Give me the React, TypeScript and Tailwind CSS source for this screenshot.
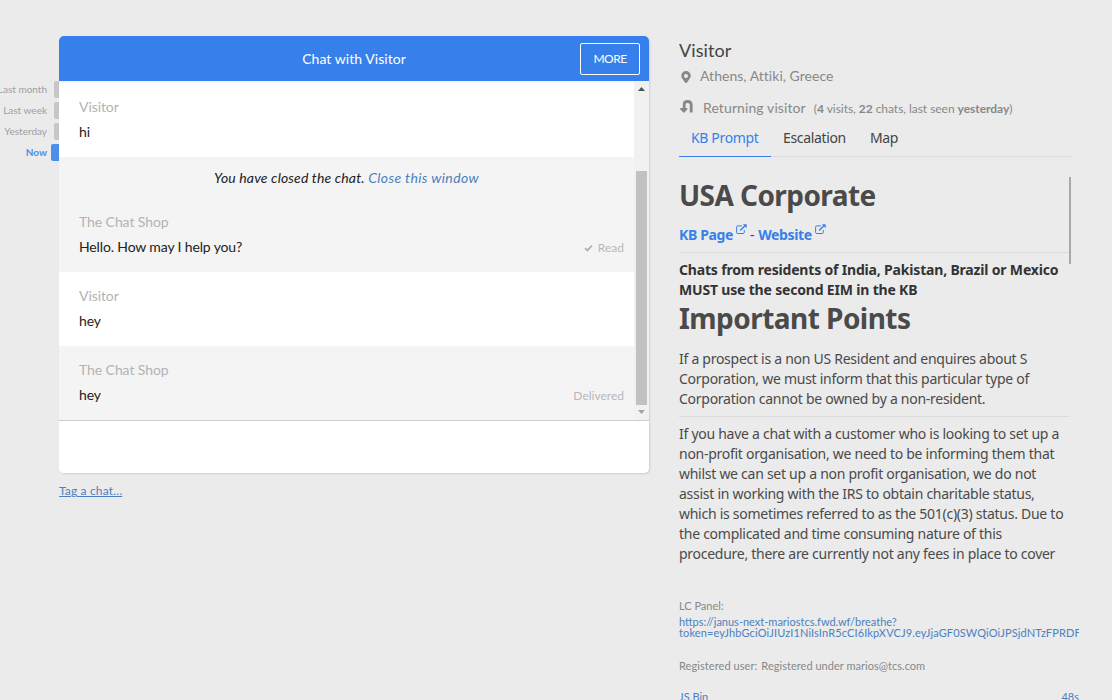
import React from "react";

type Message = { author: string; text: string; status?: string; read?: boolean };

const droid = "font-['Noto_Sans','Open_Sans',sans-serif]";

const periods = [
  { label: "Last month", active: false },
  { label: "Last week", active: false },
  { label: "Yesterday", active: false },
  { label: "Now", active: true },
];

const replies: Message[] = [
  { author: "The Chat Shop", text: "Hello. How may I help you?", status: "Read", read: true },
  { author: "Visitor", text: "hey" },
  { author: "The Chat Shop", text: "hey", status: "Delivered" },
];

function Row({ m }: { m: Message }) {
  const own = m.author !== "Visitor";
  return (
    <div className={`flex h-[74px] shrink-0 flex-col pt-[11px] pr-[10px] pl-5 ${own ? "bg-[#f4f4f4]" : "bg-white"}`}>
      <div className="h-[25px] text-[14px] leading-[25px] tracking-[-0.08px] text-[#b3b3b3]">{m.author}</div>
      <div className="flex h-[25px] items-center justify-between text-[14px] leading-[25px] text-[#222]">
        <span className="tracking-[-0.14px]">{m.text}</span>
        {m.status && (
          <span className="flex items-center gap-[5px] pt-[2px] text-[12px] text-[#b8b8b8]">
            {m.read && (
              <svg width="9" height="8" viewBox="0 0 9 8" fill="none" stroke="#b0b0b0" strokeWidth="1.8">
                <path d="M1 4.2 3.4 6.4 8 1.7" />
              </svg>
            )}
            {m.status}
          </span>
        )}
      </div>
    </div>
  );
}

function External() {
  return (
    <svg width="11" height="11" viewBox="0 0 11 11" fill="none" stroke="#377fea" className="mt-[-11px] ml-[3px] shrink-0">
      <path d="M6 1.9H1.8a1.2 1.2 0 0 0-1.2 1.2v5.2a1.2 1.2 0 0 0 1.2 1.2h5.3a1.2 1.2 0 0 0 1.2-1.2V6" />
      <path d="M4.1 6.6 8.8 1.9" strokeWidth="1.4" />
      <path d="M6.8.3h3.9v3.9z" fill="#377fea" stroke="none" />
    </svg>
  );
}

function Chat() {
  return (
    <section className="flex h-[437px] w-[590px] flex-col overflow-hidden rounded-[5px] bg-white shadow-[1px_1px_2px_rgba(0,0,0,0.12)]">
      <header className="grid h-[45px] shrink-0 grid-cols-[1fr_auto_1fr] items-center bg-[#377fea] pr-[9px] text-white">
        <span />
        <h1 className="pl-[9px] text-[14px] tracking-[0.05px]">Chat with Visitor</h1>
        <button className="h-8 w-[60px] justify-self-end rounded-[2px] border border-white text-[12px] tracking-[-0.5px]">MORE</button>
      </header>
      <div className="flex h-[339px] shrink-0">
        <div className="flex w-[575px] flex-col border-t-2 border-[#f4f4f4] bg-[#f4f4f4]">
          <Row m={{ author: "Visitor", text: "hi" }} />
          <div className="h-[41px] pt-[8px] text-center text-[14px] leading-[25px] tracking-[0.15px] text-[#222] italic">
            You have closed the chat. <a className="tracking-[0.38px] text-[#4c80bf]">Close this window</a>
          </div>
          {replies.map((m, i) => (
            <Row key={i} m={m} />
          ))}
        </div>
        <div className="flex w-[15px] flex-col items-center bg-[#f1f1f1] pt-[6px] pb-[6px]">
          <svg width="7" height="4" viewBox="0 0 7 4" className="shrink-0"><path d="M0 4 3.5 0 7 4z" fill="#505050" /></svg>
          <div className="mt-[80px] h-[234px] w-[11px] shrink-0 bg-[#c1c1c1]" />
          <svg width="7" height="4" viewBox="0 0 7 4" className="mt-[5px] shrink-0"><path d="M0 0 3.5 4 7 0z" fill="#a3a3a3" /></svg>
        </div>
      </div>
      <div className="flex-1 border-t border-[#ccc] bg-white" />
    </section>
  );
}

function Tabs() {
  return (
    <nav className={`flex h-[39px] w-[392px] shrink-0 border-b border-[#dadada] text-[14px] leading-[40px] tracking-[-0.35px] text-[#444] ${droid}`}>
      <span className="h-[39px] w-[92px] border-b border-[#377fea] pl-3 text-[#377fea]">KB Prompt</span>
      <span className="w-[87px] pl-3">Escalation</span>
      <span className="pl-3">Map</span>
    </nav>
  );
}

const nonProfit = [
  "If you have a chat with a customer who is looking to set up a",
  "non-profit organisation, we need to be informing them that",
  "whilst we can set up a non profit organisation, we do not",
  "assist in working with the IRS to obtain charitable status,",
  "which is sometimes referred to as the 501(c)(3) status. Due to",
  "the complicated and time consuming nature of this",
  "procedure, there are currently not any fees in place to cover",
];

const resident = [
  "If a prospect is a non US Resident and enquires about S",
  "Corporation, we must inform that this particular type of",
  "Corporation cannot be owned by a non-resident.",
];

function Knowledge() {
  return (
    <div className={`mt-5 flex h-[394px] w-[392px] shrink-0 text-[14px] leading-5 tracking-[-0.27px] whitespace-nowrap text-[#4a4a4a] ${droid}`}>
      <div className="w-[390px] shrink-0">
        <h2 className="h-[48px] text-[28px] leading-[37px] font-bold tracking-[-0.57px]">USA Corporate</h2>
        <div className="flex h-[28px] items-center border-b border-[#dadada] pb-[8px] font-bold tracking-[-0.36px] text-[#377fea]">
          KB Page<External />
          <span className="mr-[4px] ml-[3px] font-normal text-[#444]">-</span>
          Website<External />
        </div>
        <p className="mt-[7px] font-bold tracking-[-0.18px] text-[#333]">
          Chats from residents of India, Pakistan, Brazil or Mexico<br />MUST use the second EIM in the KB
        </p>
        <h2 className="h-[49px] text-[28px] leading-[36px] font-bold tracking-[-0.54px]">Important Points</h2>
        <div className="h-[68px] border-b border-[#dadada]">
          {resident.map((line) => <p key={line}>{line}</p>)}
        </div>
        <div className="mt-[7px]">
          {nonProfit.map((line) => <p key={line}>{line}</p>)}
        </div>
      </div>
      <div className="h-[87px] w-[2px] bg-[#a8a8a8]" />
    </div>
  );
}

function Details() {
  return (
    <aside className="ml-[30px] flex w-[400px] shrink-0 flex-col overflow-hidden text-[#888]">
      <div className="h-[28px] shrink-0 text-[18px] leading-[29px] tracking-[0.1px] text-[#444]">Visitor</div>
      <div className="flex h-[24px] shrink-0 items-center gap-[9px] pl-[2px] text-[14px]">
        <svg width="10" height="12" viewBox="0 0 10 12" className="mt-px">
          <path fillRule="evenodd" fill="#888" d="M5 0a4.8 4.8 0 0 1 4.8 4.8C9.8 7 7.8 8.8 6.5 11Q5 13 3.5 11C2.2 8.8.2 7 .2 4.8A4.8 4.8 0 0 1 5 0Zm0 2.9a2 2 0 1 0 0 4 2 2 0 0 0 0-4Z" />
        </svg>
        <span className="mt-[-1px] tracking-[0.03px]">Athens, Attiki, Greece</span>
      </div>
      <div className="mt-[10px] flex h-[20px] shrink-0 items-center pl-[1px] text-[14px] whitespace-nowrap">
        <svg width="14" height="13" viewBox="0 0 14 13" className="mt-[-3px] mr-[9px]">
          <path d="M4.2 9V4.2C4.2 2.300 5.400 1.500 7.700 1.500S11.200 2.500 11.200 4.800V12.500" stroke="#888" strokeWidth="2.800" fill="none" />
          <path d="M.3 8h7v1.200L4.500 12.500H3.200L.3 9.200z" fill="#888" />
        </svg>
        <span className="mt-[-1px] tracking-[0.1px]">Returning visitor</span>
        <span className="mt-px ml-2 text-[12px] tracking-[-0.04px]">(<b>4</b> visits, <b>22</b> chats, last seen <b>yesterday</b>)</span>
      </div>
      <Tabs />
      <Knowledge />
      <div className="mt-[28px] text-[11px] leading-[14px]">LC Panel:</div>
      <a className="mt-[3px] h-[23px] shrink-0 text-[11px] leading-[11px] whitespace-nowrap text-[#4c80bf]">
        https://janus-next-mariostcs.fwd.wf/breathe?<br />
        <span className="tracking-[0.13px]">token=eyJhbGciOiJIUzI1NiIsInR5cCI6IkpXVCJ9.eyJjaGF0SWQiOiJPSjdNTzFPRDF</span>
      </a>
      <div className="mt-[20px] flex gap-1 text-[11px] leading-[14px]">
        <span className="tracking-[0.07px]">Registered user:</span><span className="tracking-[0.03px]">Registered under marios@tcs.com</span>
      </div>
      <div className="mt-[17px] flex justify-between text-[11px] leading-[14px] text-[#4c80bf]">
        <span>JS Bin</span><span>48s</span>
      </div>
    </aside>
  );
}

export default function App() {
  return (
    <main className="flex h-[700px] w-[1112px] overflow-hidden bg-[#ebebeb] pt-9 font-['Lato',sans-serif]">
      <div className="flex w-[59px] shrink-0 flex-col gap-1 pt-[45px]">
        {periods.map((p) => (
          <div key={p.label} className={`flex h-[17px] items-center justify-end text-[10px] whitespace-nowrap ${p.active ? "gap-1 font-bold text-[#4c8eeb]" : "gap-[7px] text-[#a0a0a0]"}`}>
            <span>{p.label}</span>
            <span className={p.active ? "h-[17px] w-2 shrink-0 rounded-l-[2px] bg-[#4c8eeb]" : "h-[17px] w-[5px] shrink-0 rounded-l-[2px] bg-[#c7c7c7]"} />
          </div>
        ))}
      </div>
      <div className="w-[590px] shrink-0">
        <Chat />
        <a className="mt-[10px] block text-[12px] leading-[16px] tracking-[0.15px] text-[#4c80bf] underline">Tag a chat…</a>
      </div>
      <Details />
    </main>
  );
}
